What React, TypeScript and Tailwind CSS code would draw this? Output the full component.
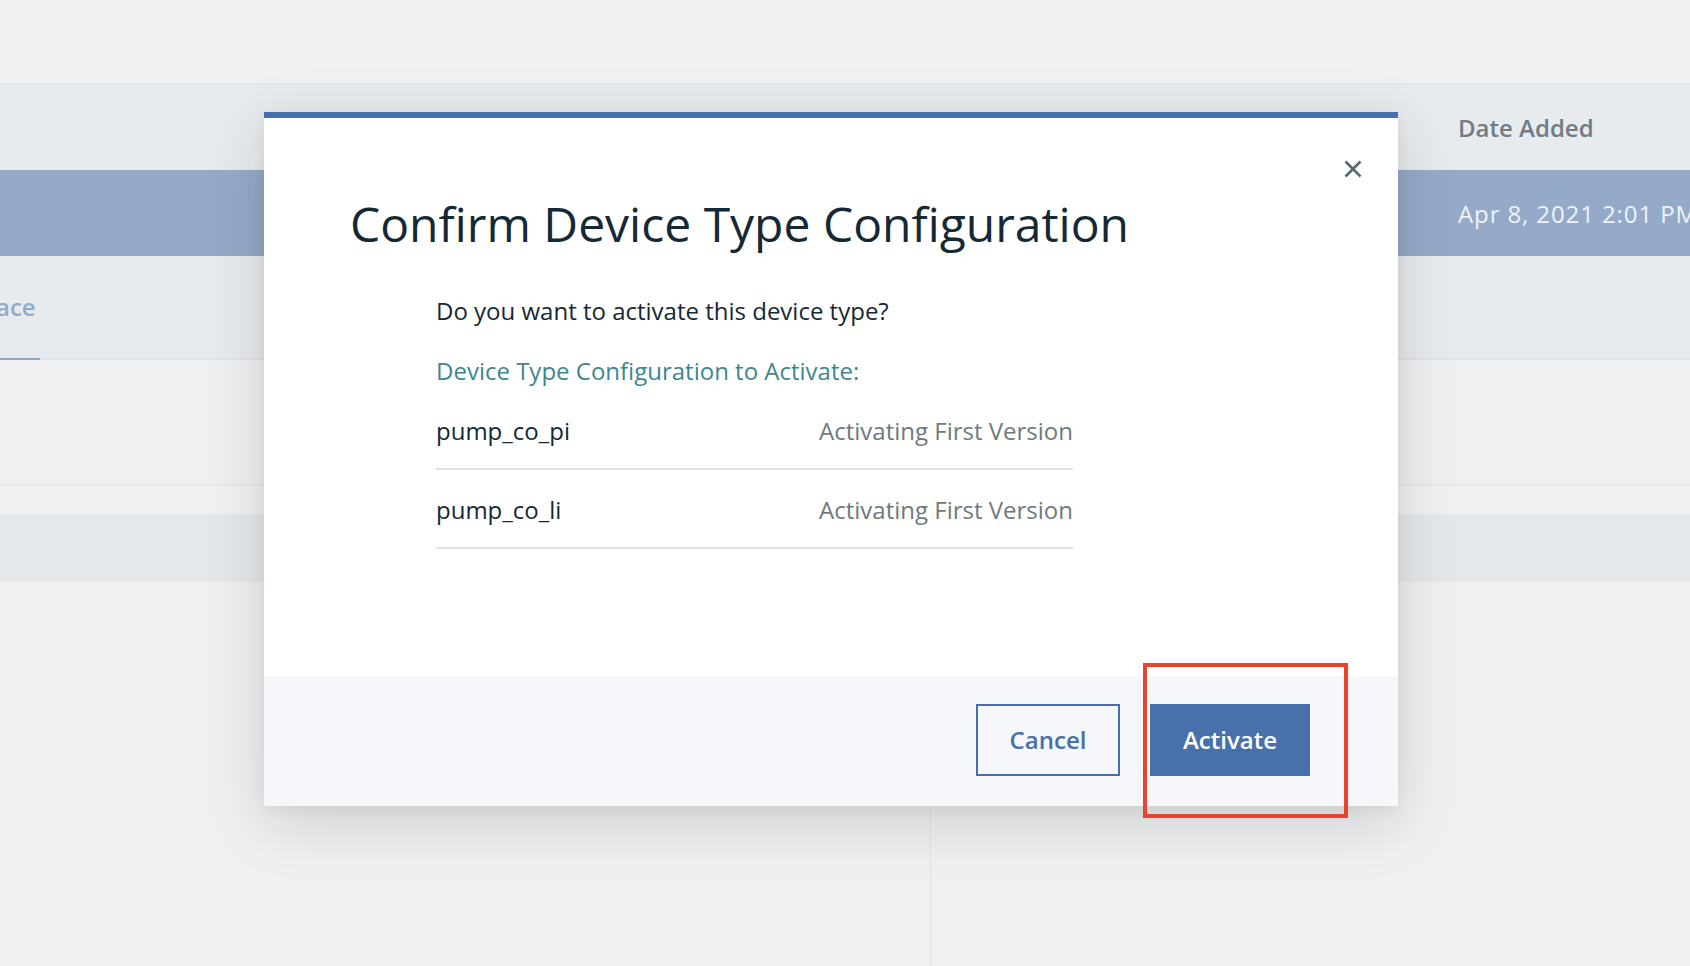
import React from "react";

function CloseIcon() {
  return (
    <svg width="18" height="18" viewBox="0 0 18 18" fill="none">
      <path d="M1.5 1.5 L16.5 16.5 M16.5 1.5 L1.5 16.5" stroke="#5a6872" strokeWidth="2.6" strokeLinecap="butt" />
    </svg>
  );
}

function Row({ name }: { name: string }) {
  return (
    <div className="flex justify-between pt-[24px] pb-[21px] border-b-2 border-[#dfe3e6] text-[24px] leading-[32px] whitespace-nowrap">
      <span className="text-[#152935]">{name}</span>
      <span className="text-[#6f7a7b]">Activating First Version</span>
    </div>
  );
}

export default function App() {
  return (
    <div className="relative w-[1690px] h-[966px] overflow-hidden bg-[#eff0f2] font-['Open_Sans','Noto_Sans',sans-serif]">
      {/* background page */}
      <div className="flex flex-col h-full">
        <div className="h-[85px] shrink-0 bg-[#f0f1f3] border-b-2 border-[#e3e6e9]" />
        <div className="h-[85px] shrink-0 flex items-center bg-[#e8ebee]">
          <div className="w-[1458px] shrink-0" />
          <span className="text-[24px] leading-[32px] font-semibold text-[#727c85] whitespace-nowrap">Date Added</span>
        </div>
        <div className="h-[86px] shrink-0 flex items-center pt-[2px] bg-[#94aac8]">
          <div className="w-[1458px] shrink-0" />
          <span className="text-[24px] leading-[32px] tracking-[0.9px] text-[#eef2f8] whitespace-nowrap">Apr 8, 2021 2:01 PM</span>
        </div>
        <div className="h-[104px] shrink-0 flex bg-[#e8ebee] border-b-2 border-[#e0e3e6]">
          <div className="h-[104px] w-[40px] shrink-0 flex items-center border-b-2 border-[#8ea6c7] overflow-visible">
            <span className="ml-[-4px] text-[24px] leading-[32px] font-semibold text-[#94aac9] whitespace-nowrap">ace</span>
          </div>
        </div>
        <div className="h-[126px] shrink-0 bg-[#eff0f2] border-b-2 border-[#e6e8eb]" />
        <div className="h-[28px] shrink-0 bg-[#eff1f3]" />
        <div className="h-[68px] shrink-0 bg-[#e5e8eb]" />
        <div className="flex-1 flex">
          <div className="w-[931px] shrink-0 border-r border-[#e2e4e7]" />
          <div className="flex-1" />
        </div>
      </div>

      {/* modal */}
      <div className="absolute left-[264px] top-[112px] w-[1134px] flex flex-col shadow-[0_16px_60px_rgba(0,0,0,0.14),0_4px_14px_rgba(0,0,0,0.05)]">
        <div className="h-[6px] bg-[#4670ad]" />
        <div className="relative h-[558px] bg-white pl-[86px] pt-[78px]">
          <button className="absolute right-[36px] top-[42px] w-[18px] h-[18px] flex items-center justify-center">
            <CloseIcon />
          </button>
          <h2 className="text-[48px] leading-[56px] font-normal text-[#152935] whitespace-nowrap">
            Confirm Device Type Configuration
          </h2>
          <div className="ml-[86px] w-[637px] mt-[43px]">
            <p className="text-[24px] leading-[32px] text-[#152935] whitespace-nowrap">Do you want to activate this device type?</p>
            <p className="mt-[28px] text-[24px] leading-[32px] text-[#3f868d] whitespace-nowrap">Device Type Configuration to Activate:</p>
            <div className="mt-[4px]">
              <Row name="pump_co_pi" />
              <Row name="pump_co_li" />
            </div>
          </div>
        </div>
        <div className="h-[130px] bg-[#f5f7fa] flex justify-end items-start pt-[28px] pr-[88px] gap-[30px]">
          <button className="w-[144px] h-[72px] border-2 border-[#4670ad] bg-transparent text-[#4670ad] text-[24px] font-semibold flex items-center justify-center">
            Cancel
          </button>
          <button className="w-[160px] h-[72px] bg-[#4870ab] text-white text-[24px] font-semibold flex items-center justify-center">
            Activate
          </button>
        </div>
      </div>

      {/* annotation */}
      <div className="absolute left-[1143px] top-[663px] w-[205px] h-[155px] border-4 border-[#e8432c] pointer-events-none" />
    </div>
  );
}
